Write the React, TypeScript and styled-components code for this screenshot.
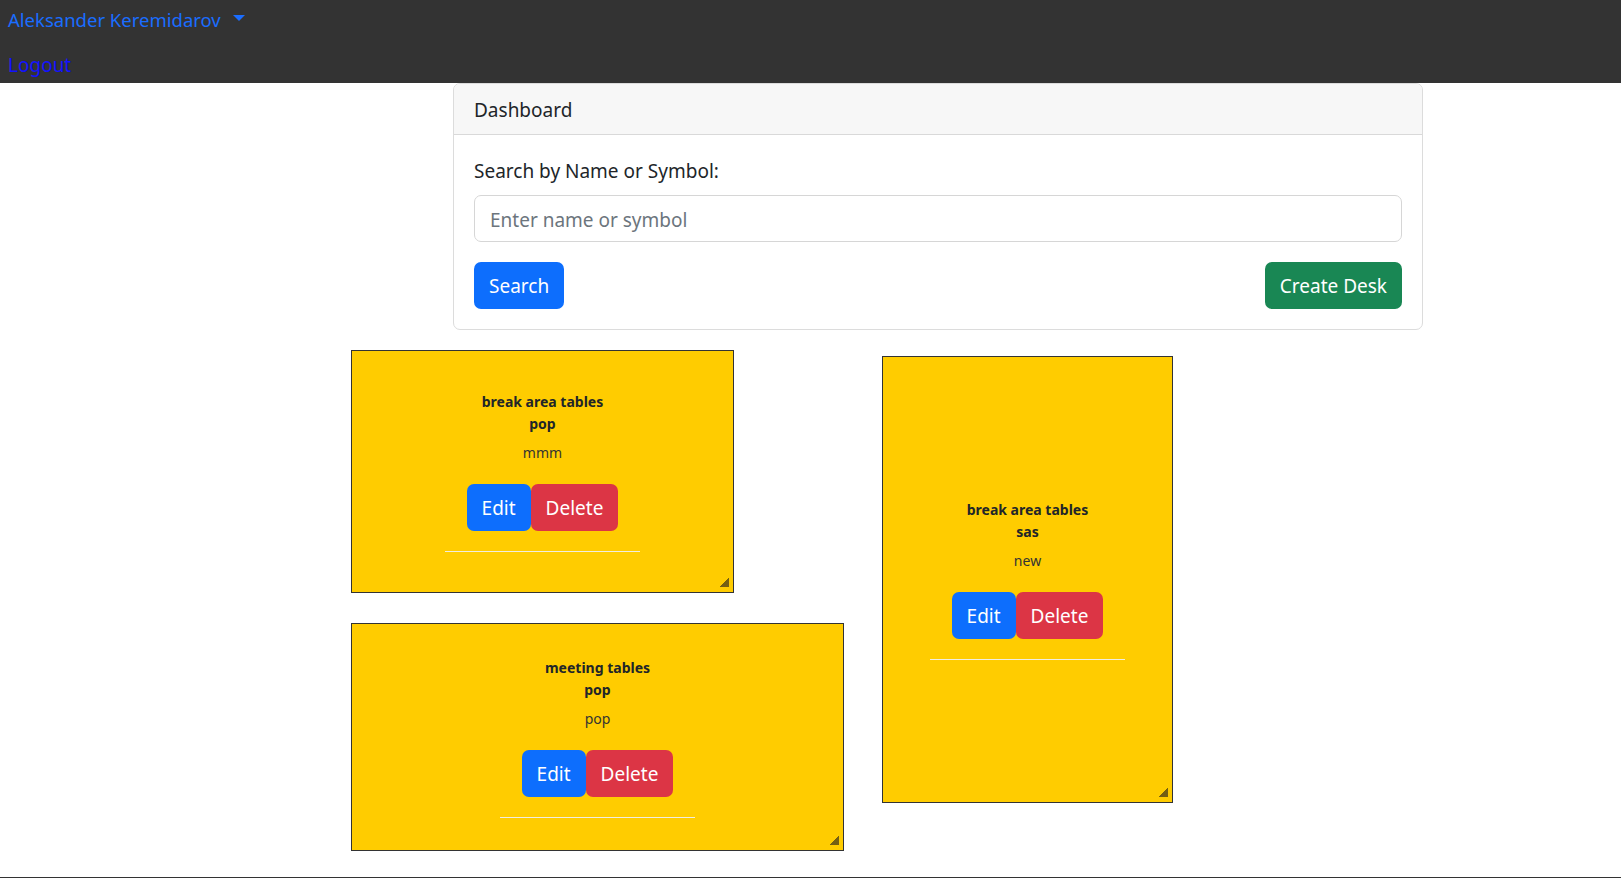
import React from "react";
import styled, { createGlobalStyle } from "styled-components";

const GlobalStyle = createGlobalStyle`
  html, body {
    margin: 0;
    padding: 0;
    background: #ffffff;
  }
  body {
    font-family: "Noto Sans", "Open Sans", "DejaVu Sans", sans-serif;
    color: #212529;
  }
  * { box-sizing: border-box; }
`;

const Page = styled.div`
  min-height: 100vh;
  display: flex;
  flex-direction: column;
`;

const NavBar = styled.nav`
  background: #333333;
  height: 83px;
  padding: 4px 8px;
  display: flex;
  flex-direction: column;
  align-items: flex-start;
  gap: 15px;
`;

const UserToggle = styled.a`
  display: inline-flex;
  align-items: center;
  height: 30px;
  padding-top: 1px;
  font-size: 18.5px;
  line-height: 30px;
  color: #1a6dff;
  text-decoration: none;
  cursor: pointer;
  &::after {
    content: "";
    display: inline-block;
    margin-left: 12px;
    border-top: 6px solid #1a6dff;
    border-left: 6px solid transparent;
    border-right: 6px solid transparent;
    transform: translateY(-2px);
  }
`;

const LogoutLink = styled.a`
  height: 30px;
  padding-top: 1px;
  font-size: 19px;
  line-height: 30px;
  color: #1212ff;
  text-decoration: none;
  cursor: pointer;
`;

const Main = styled.main`
  display: flex;
  flex-direction: column;
`;

const DashCard = styled.section`
  margin-left: 453px;
  width: 970px;
  border: 1px solid #dcdcdc;
  border-radius: 7px;
  background: #fff;
  overflow: hidden;
`;

const DashHeader = styled.header`
  background: #f7f7f7;
  border-bottom: 1px solid #d9d9d9;
  padding: 11px 20px 9px;
  font-size: 19px;
  line-height: 30px;
  color: #212529;
`;

const DashBody = styled.div`
  padding: 20px;
  display: flex;
  flex-direction: column;
`;

const Label = styled.label`
  font-size: 19px;
  line-height: 30px;
  padding-top: 1px;
  margin-bottom: 9px;
  color: #212529;
`;

const SearchInput = styled.input`
  height: 47px;
  width: 100%;
  border: 1px solid #d6d6d6;
  border-radius: 7px;
  padding: 2px 15px 0;
  font-family: inherit;
  font-size: 19px;
  color: #212529;
  outline: none;
  &::placeholder {
    color: #6c757d;
  }
`;

const ActionRow = styled.div`
  margin-top: 20px;
  display: flex;
  justify-content: space-between;
`;

const Button = styled.button<{ $variant: "primary" | "success" | "danger" }>`
  height: 47px;
  padding: 2px 15px 0;
  border: none;
  border-radius: 7px;
  font-family: inherit;
  font-size: 19px;
  line-height: 45px;
  color: #ffffff;
  cursor: pointer;
  background: ${(p) =>
    p.$variant === "primary"
      ? "#0d6efd"
      : p.$variant === "success"
      ? "#198754"
      : "#dc3545"};
`;

const DeskArea = styled.div`
  margin-top: 20px;
  padding-left: 351px;
  display: flex;
  align-items: flex-start;
  gap: 38px;
`;

const DeskColumn = styled.div<{ $offset?: number }>`
  display: flex;
  flex-direction: column;
  gap: 30px;
  margin-top: ${(p) => p.$offset ?? 0}px;
`;

const Note = styled.div<{ $w: number; $h: number }>`
  width: ${(p) => p.$w}px;
  height: ${(p) => p.$h}px;
  background: #ffcc00;
  border: 1px solid #333333;
  resize: both;
  overflow: hidden;
  display: flex;
  align-items: center;
  justify-content: center;
  &::-webkit-resizer {
    background: linear-gradient(
        to bottom right,
        transparent 52%,
        rgba(70, 58, 25, 0.75) 52%
      )
      no-repeat 1px 0 / 10px 10px;
  }
`;

const NoteContent = styled.div`
  width: 195px;
  display: flex;
  flex-direction: column;
  align-items: center;
  text-align: center;
`;

const NoteTitle = styled.div`
  font-size: 14px;
  font-weight: 700;
  line-height: 22px;
  color: #212529;
`;

const NoteDesc = styled.div`
  margin-top: 7px;
  font-size: 14px;
  line-height: 22px;
  color: #333333;
`;

const NoteActions = styled.div`
  margin-top: 20px;
  display: flex;
`;

const NoteRule = styled.hr`
  margin: 20px 0 0;
  width: 100%;
  border: none;
  border-top: 1px solid #f1ede0;
`;

const Footer = styled.footer`
  margin-top: auto;
  height: 1px;
  background: #333333;
`;

type Desk = { name: string; code: string; desc: string; w: number; h: number };

const column1: Desk[] = [
  { name: "break area tables", code: "pop", desc: "mmm", w: 383, h: 243 },
  { name: "meeting tables", code: "pop", desc: "pop", w: 493, h: 228 },
];
const column2: Desk[] = [
  { name: "break area tables", code: "sas", desc: "new", w: 291, h: 447 },
];

function DeskNote({ desk }: { desk: Desk }) {
  return (
    <Note $w={desk.w} $h={desk.h}>
      <NoteContent>
        <NoteTitle>
          {desk.name}
          <br />
          {desk.code}
        </NoteTitle>
        <NoteDesc>{desk.desc}</NoteDesc>
        <NoteActions>
          <Button $variant="primary">Edit</Button>
          <Button $variant="danger">Delete</Button>
        </NoteActions>
        <NoteRule />
      </NoteContent>
    </Note>
  );
}

export default function App() {
  return (
    <>
      <GlobalStyle />
      <Page>
        <NavBar>
          <UserToggle>Aleksander Keremidarov</UserToggle>
          <LogoutLink>Logout</LogoutLink>
        </NavBar>
        <Main>
          <DashCard>
            <DashHeader>Dashboard</DashHeader>
            <DashBody>
              <Label htmlFor="search">Search by Name or Symbol:</Label>
              <SearchInput id="search" placeholder="Enter name or symbol" />
              <ActionRow>
                <Button $variant="primary">Search</Button>
                <Button $variant="success">Create Desk</Button>
              </ActionRow>
            </DashBody>
          </DashCard>
          <DeskArea>
            <DeskColumn>
              {column1.map((d, i) => (
                <DeskNote key={i} desk={d} />
              ))}
            </DeskColumn>
            <DeskColumn $offset={6}>
              {column2.map((d, i) => (
                <DeskNote key={i} desk={d} />
              ))}
            </DeskColumn>
          </DeskArea>
        </Main>
        <Footer />
      </Page>
    </>
  );
}
